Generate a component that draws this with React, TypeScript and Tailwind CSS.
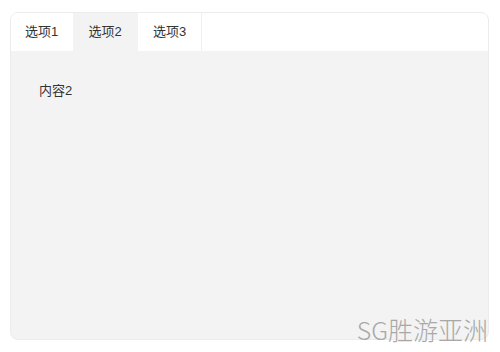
import { useState } from "react";

const TABS = [
  { label: "选项1", width: "w-[62px]" },
  { label: "选项2", width: "w-[65px]" },
  { label: "选项3", width: "w-[64px]" },
];

export default function App() {
  const [active, setActive] = useState(1);

  return (
    <div className="relative h-[352px] w-[500px] bg-white pl-[10px] pr-[11px] pt-[12px] [font-family:'Liberation_Sans','Noto_Sans_CJK_SC',sans-serif]">
      <div className="flex h-[328px] flex-col overflow-hidden rounded-lg border border-[#ececec] bg-[#f3f3f3]">
        <div className="flex h-[38px] shrink-0 bg-white">
          {TABS.map((t, i) => (
            <button
              key={t.label}
              type="button"
              onClick={() => setActive(i)}
              className={`${t.width} border-r text-[13px] text-[#333] ${i === active ? "bg-[#f3f3f3]" : "bg-white"} ${i === 2 ? "border-[#f0f0f0]" : "border-transparent"}`}
            >
              {t.label}
            </button>
          ))}
        </div>
        <div className="px-[28px] pt-[30px] text-[13px] text-[#333]">内容{active + 1}</div>
      </div>
      <div className="absolute bottom-[10px] right-[12px] text-[25px] leading-none font-light text-[#a8a8a8] [font-family:'Noto_Sans_CJK_SC',sans-serif]">
        SG胜游亚洲
      </div>
    </div>
  );
}
